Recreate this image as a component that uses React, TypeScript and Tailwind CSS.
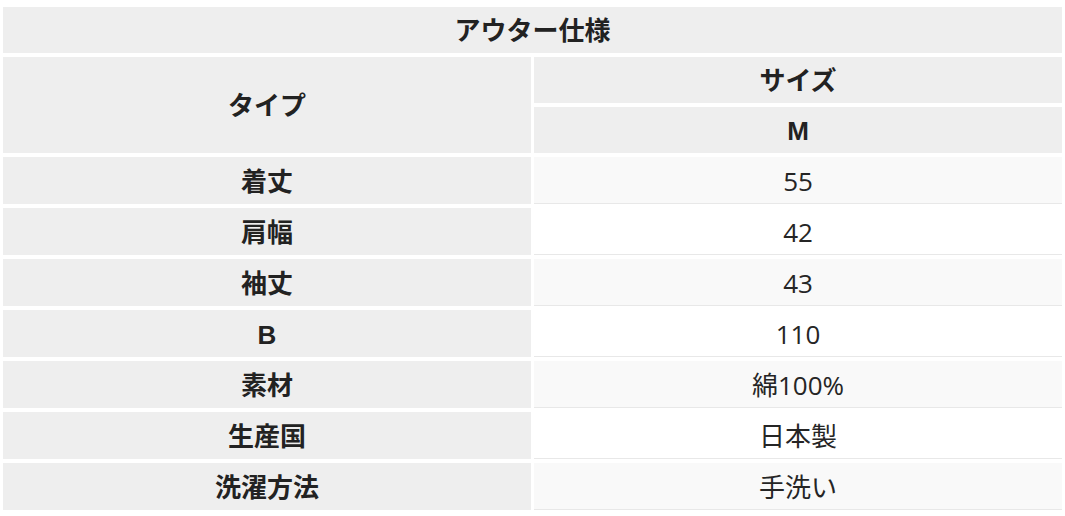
import React from 'react';

const rows: [string, string][] = [
  ['着丈', '55'],
  ['肩幅', '42'],
  ['袖丈', '43'],
  ['B', '110'],
  ['素材', '綿100%'],
  ['生産国', '日本製'],
  ['洗濯方法', '手洗い'],
];

const head = "font-['Liberation_Sans','Noto_Sans_CJK_JP',sans-serif] font-bold text-[#222] text-[26px] leading-none pt-[2px]";
const body = "font-['Open_Sans','Noto_Sans_CJK_JP',sans-serif] text-[#252525] text-[26px] leading-none pt-[2px]";

export default function App() {
  return (
    <div className="w-[1065px] h-[516px] bg-white pt-[3px]">
      <table className="w-full table-fixed border-separate border-spacing-x-[3px] border-spacing-y-[4px]">
        <thead>
          <tr>
            <th colSpan={2} className={`h-[46px] bg-[#eeeeee] text-center px-0 pb-0 ${head}`}>
              アウター仕様
            </th>
          </tr>
          <tr>
            <th rowSpan={2} className={`w-1/2 bg-[#eeeeee] text-center px-0 pb-0 ${head}`}>
              タイプ
            </th>
            <th className={`w-1/2 h-[46px] bg-[#eeeeee] text-center px-0 pb-0 ${head}`}>サイズ</th>
          </tr>
          <tr>
            <th className={`h-[46px] bg-[#eeeeee] text-center px-0 pb-0 ${head}`}>M</th>
          </tr>
        </thead>
        <tbody>
          {rows.map(([label, value], i) => (
            <tr key={label}>
              <th className={`h-[47px] bg-[#eeeeee] text-center px-0 pb-0 ${head}`}>{label}</th>
              <td
                className={`h-[47px] text-center px-0 pb-0 border-b border-[#e8e8e8] ${
                  i % 2 === 0 ? 'bg-[#f9f9f9]' : 'bg-white'
                } ${body}`}
              >
                {value}
              </td>
            </tr>
          ))}
        </tbody>
      </table>
    </div>
  );
}
